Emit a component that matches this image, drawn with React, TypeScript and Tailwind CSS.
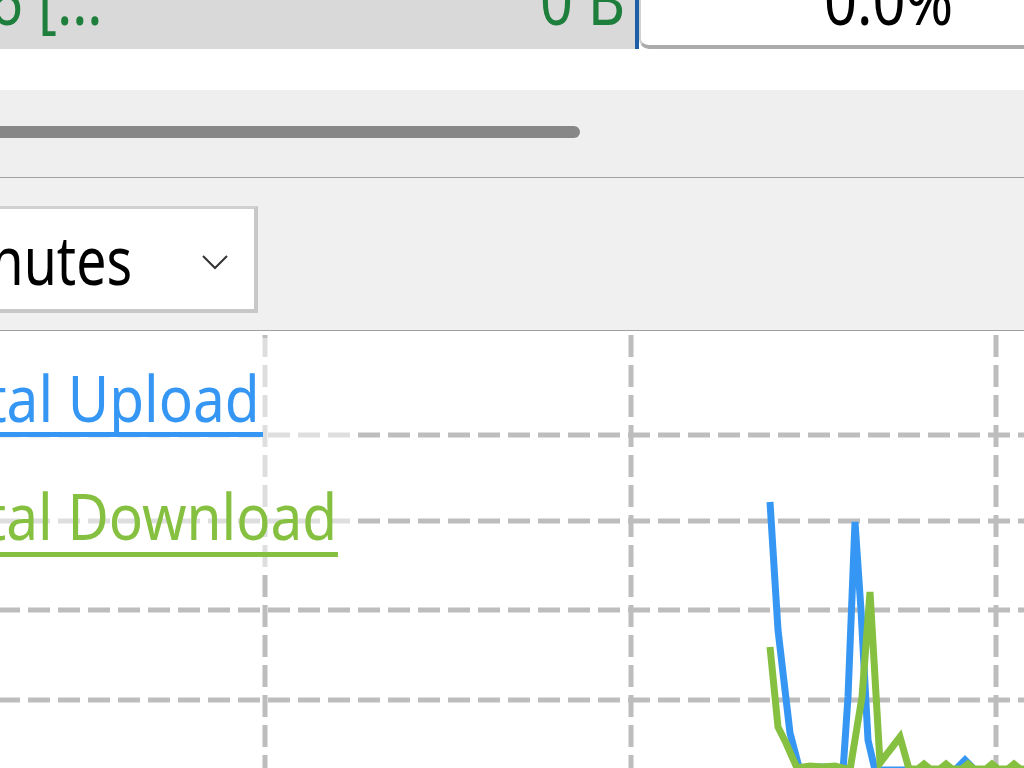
const upload: [number, number][] = [
  [770, 171], [778, 299], [790, 402], [800, 440], [812, 436], [822, 436], [832, 436],
  [843, 440], [848, 366], [855, 191], [861, 279], [868, 409], [875, 439], [890, 439],
  [955, 439], [965, 429], [975, 439], [1030, 439],
];

const download: [number, number][] = [
  [770, 316], [778, 396], [786, 412], [797, 437], [810, 435], [822, 436], [835, 435],
  [850, 439], [862, 366], [870, 261], [880, 432], [900, 406], [909, 438], [918, 438],
  [924, 433], [930, 438], [940, 438], [946, 433], [952, 438], [962, 438], [968, 433],
  [974, 438], [986, 438], [992, 433], [998, 438], [1008, 438], [1014, 433], [1020, 438],
  [1030, 438],
];

const toPoints = (pts: [number, number][]) => pts.map(([x, y]) => `${x},${y}`).join(" ");

function TrafficChart() {
  return (
    <div className="relative h-[437px] bg-white">
      <svg className="absolute inset-0" width={1024} height={437} viewBox="0 0 1024 437">
        {/* grid */}
        <g stroke="#bdbdbd" strokeWidth={5} strokeDasharray="22 8">
          {[265, 631, 996].map((x) => (
            <line key={x} x1={x} y1={4} x2={x} y2={437} />
          ))}
          {[104, 190, 279, 369].map((y) => (
            <line key={y} x1={-2} y1={y} x2={1024} y2={y} />
          ))}
        </g>
        <polyline points={toPoints(upload)} fill="none" stroke="#3597f3" strokeWidth={7} />
        <polyline points={toPoints(download)} fill="none" stroke="#86c040" strokeWidth={7} />
      </svg>

      {/* legend */}
      <div className="absolute left-0 top-[7px] h-[235px] w-[356px] bg-white/50 pt-[28px]">
        <div className="w-[263px]">
          <div className="flex justify-end pr-[3px] text-[63px] leading-none text-[#3597f3]">
            <span className="inline-block shrink-0 origin-right scale-x-[0.9] whitespace-nowrap">Total Upload</span>
          </div>
          <div className="mt-[3px] h-[5px] bg-[#3597f3]" />
        </div>
        <div className="mt-[47px] w-[338px]">
          <div className="flex justify-end pr-[1px] text-[63px] leading-none text-[#86c040]">
            <span className="inline-block shrink-0 origin-right scale-x-[0.9] whitespace-nowrap">Total Download</span>
          </div>
          <div className="mt-[5px] h-[5px] bg-[#86c040]" />
        </div>
      </div>
    </div>
  );
}

export default function App() {
  return (
    <div className="h-[768px] w-[1024px] overflow-hidden bg-white font-['Noto_Sans',sans-serif]">
      {/* process row */}
      <div className="flex h-[49px] overflow-hidden">
        <div className="flex w-[635px] shrink-0 items-start justify-between overflow-hidden bg-[#d9d9d9] pr-[10px] text-[67px] leading-none text-[#1e7e3c]">
          <span className="-ml-[10px] -mt-[34px] inline-block shrink-0 origin-left scale-x-[0.86] whitespace-nowrap">6 […</span>
          <span className="-mt-[34px] inline-block shrink-0 origin-right scale-x-[0.86] whitespace-nowrap">0 B</span>
        </div>
        <div className="w-[4px] shrink-0 bg-[#1d5ea8]" />
        <div className="flex flex-1 items-start overflow-hidden rounded-bl-[10px] border-b-[4px] border-l-[2px] border-b-[#ababab] border-l-[#d0d0d0] bg-white pl-[183px] text-[67px] leading-none text-black">
          <span className="-mt-[34px] inline-block shrink-0 origin-left scale-x-[0.86] whitespace-nowrap">0.0%</span>
        </div>
      </div>

      <div className="h-[41px] bg-white" />

      {/* horizontal scrollbar */}
      <div className="h-[87px] bg-[#efefef] pt-[36px]">
        <div className="h-[12px] w-[580px] rounded-r-full bg-[#878787]" />
      </div>

      <div className="h-px bg-[#a0a0a0]" />

      {/* range picker */}
      <div className="h-[152px] bg-[#f0f0f0] pt-[28px]">
        <div className="-ml-[10px] flex h-[107px] w-[268px] items-center overflow-hidden border-[3px] border-r-[4px] border-b-[4px] border-[#d0d0d0] border-r-[#c8c8c8] border-b-[#c8c8c8] bg-white">
          <div className="flex w-[139px] shrink-0 justify-end text-[67px] leading-none text-black">
            <span className="inline-block shrink-0 origin-right scale-x-[0.8] whitespace-nowrap">Last 5 Minutes</span>
          </div>
          <svg className="ml-[69px] mt-[6px] shrink-0" width={28} height={16} viewBox="0 0 28 16">
            <path d="M2 2 L14 14 L26 2" fill="none" stroke="#333" strokeWidth={2} />
          </svg>
        </div>
      </div>

      <div className="h-px bg-[#a0a0a0]" />

      <TrafficChart />
    </div>
  );
}
